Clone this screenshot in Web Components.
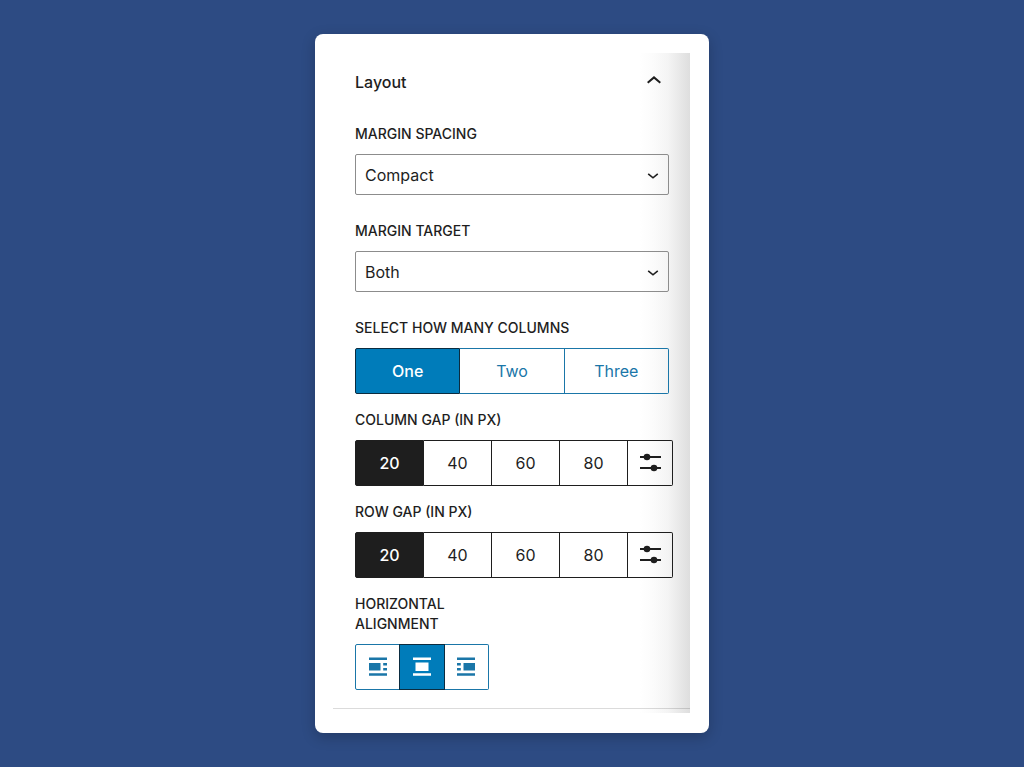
<!DOCTYPE html>
<html lang="en">
<head>
<meta charset="utf-8">
<meta name="viewport" content="width=device-width, initial-scale=1">
<title>Layout settings</title>
<style>
  body {
    margin: 0;
    min-height: 100vh;
    display: grid;
    justify-items: center;
    align-items: center;
    background: #2d4b83;
    color: #1e1e1e;
    font: 16px/20px Inter, "Liberation Sans", sans-serif;
  }
</style>
</head>
<body>
<settings-card>
  <settings-section heading="Layout">
    <select-field label="Margin spacing" options="Compact,Normal,Wide"></select-field>
    <select-field label="Margin target" options="Both,Top,Bottom"></select-field>
    <div>
      <button-group label="Select how many columns" options="One,Two,Three" selected="0"></button-group>
      <button-group label="Column gap (in px)" options="20,40,60,80,icon:sliders" selected="0" tone="dark"></button-group>
      <button-group label="Row gap (in px)" options="20,40,60,80,icon:sliders" selected="0" tone="dark"></button-group>
      <button-group label="Horizontal alignment" options="icon:left,icon:center,icon:right" selected="1" compact></button-group>
    </div>
  </settings-section>
</settings-card>

<script>
const attach = (el, html) => { el.attachShadow({ mode: 'open' }).innerHTML = html; };

class SettingsCard extends HTMLElement {
  constructor() {
    super();
    attach(this, `
      <style>
        :host { display: block; box-sizing: border-box; width: 100%; max-width: 394px; padding: 19px 19px 20px 18px;
          background: #fff; border-radius: 8px; box-shadow: 0 4px 14px rgba(0, 0, 0, .22); }
        main { padding-bottom: 4px;
          background: linear-gradient(to left, #dedede, #e8e8e8 10px, #f4f4f4 22px, #fbfbfb 36px, #fff 50px); }
      </style>
      <main><slot></slot></main>`);
  }
}
customElements.define('settings-card', SettingsCard);

class SettingsSection extends HTMLElement {
  constructor() {
    super();
    attach(this, `
      <style>
        :host { display: block; padding: 19px 21px 18px 22px; border-bottom: 1px solid rgba(0, 0, 0, .14); }
        h2 { margin: 0 0 32px; font: inherit; }
        button { display: flex; align-items: center; justify-content: space-between; width: 100%; height: 20px; padding: 0 6px 0 0;
          border: 0; background: none; color: inherit; font: 500 16px/20px Inter, sans-serif; cursor: pointer; }
        svg { width: 18px; height: 20px; fill: none; stroke: currentColor; stroke-width: 2; }
        .fields { display: grid; gap: 26px; }
        .fields[hidden] { display: none; }
      </style>
      <h2><button type="button" aria-expanded="true"><span></span>
        <svg viewBox="0 0 18 20" aria-hidden="true"><path d="M2.700 10.800 9 5.400l6.300 5.400"/></svg></button></h2>
      <div class="fields"><slot></slot></div>`);
  }
  connectedCallback() {
    const root = this.shadowRoot, button = root.querySelector('button');
    root.querySelector('span').textContent = this.getAttribute('heading');
    button.onclick = () => {
      const open = button.getAttribute('aria-expanded') === 'true';
      button.setAttribute('aria-expanded', String(!open));
      root.querySelector('.fields').hidden = open;
    };
  }
}
customElements.define('settings-section', SettingsSection);

class SelectField extends HTMLElement {
  connectedCallback() {
    const options = this.getAttribute('options').split(',').map(o => `<option>${o}</option>`).join('');
    attach(this, `
      <style>
        :host { display: grid; gap: 10px; }
        label { font: 500 14px/20px Inter, sans-serif; text-transform: uppercase; }
        .box { display: grid; align-items: center; }
        .box > * { grid-area: 1 / 1; }
        select { appearance: none; width: 100%; height: 41px; margin: 0; padding: 0 36px 0 9px; border: 1px solid #8c8c8c;
          border-radius: 2px; background: none; color: inherit; font: 16px/20px Inter, sans-serif; }
        svg { justify-self: end; width: 12px; height: 12px; margin-right: 10px; pointer-events: none;
          fill: none; stroke: currentColor; stroke-width: 1.600; }
      </style>
      <label for="control">${this.getAttribute('label')}</label>
      <div class="box"><select id="control">${options}</select>
        <svg viewBox="0 0 12 12" aria-hidden="true"><path d="M1.200 4.800 6 8.800l4.800-4"/></svg></div>`);
  }
}
customElements.define('select-field', SelectField);

const ICONS = {
  sliders: '<path d="M2 6h21M2 17h21" fill="none" stroke="currentColor" stroke-width="2"/><circle cx="9" cy="6" r="3.300"/><circle cx="16" cy="17" r="3.300"/>',
  left: '<path d="M3 2.500h18v2.600H3zM3 8h11.500v7.600H3zM17.200 8H21v2.500h-3.800zM17.200 13.100H21v2.500h-3.800zM3 18.200h18v2.600H3z"/>',
  center: '<path d="M3 2.500h18v2.600H3zM5.500 7.600h13v8.400h-13zM3 18.200h18v2.600H3z"/>',
  right: '<path d="M3 2.500h18v2.600H3zM9.500 8H21v7.600H9.500zM3 8h3.800v2.500H3zM3 13.100h3.800v2.500H3zM3 18.200h18v2.600H3z"/>'
};
const ICON_NAMES = { sliders: 'Custom value', left: 'Align left', center: 'Align center', right: 'Align right' };

class ButtonGroup extends HTMLElement {
  connectedCallback() {
    const selected = Number(this.getAttribute('selected'));
    const buttons = this.getAttribute('options').split(',').map((option, i) => {
      const name = option.startsWith('icon:') ? option.slice(5) : '';
      const content = name ? `<svg viewBox="0 0 24 24" aria-hidden="true">${ICONS[name]}</svg>` : option;
      return `<button type="button" aria-pressed="${i === selected}" ${name ? `class="icon" aria-label="${ICON_NAMES[name]}"` : ''}>${content}</button>`;
    }).join('');
    attach(this, `
      <style>
        :host { display: grid; gap: 10px; --line: #1a76a8; --text: #1a76a8; --fill: #007cba; --edge: #0b2c40; }
        :host(:not(:last-child)) { margin-bottom: 16px; }
        :host([tone="dark"]) { --line: #1e1e1e; --text: #1e1e1e; --fill: #1e1e1e; --edge: #1e1e1e; margin-right: -4px; }
        :host([compact]) { width: 134px; }
        .label { font: 500 14px/20px Inter, sans-serif; text-transform: uppercase; }
        .group { display: flex; }
        button { box-sizing: border-box; flex: 1 1 0; height: 46px; padding: 0; border: 1px solid var(--line); border-left-width: 0;
          background: none; color: var(--text); font: 16px/20px Inter, sans-serif; cursor: pointer; }
        .icon { display: grid; place-items: center; }
        :host([tone="dark"]) .icon { flex: 0 0 45px; }
        button:first-child { border-left-width: 1px; border-radius: 2px 0 0 2px; }
        button:last-child { border-radius: 0 2px 2px 0; }
        button[aria-pressed="true"] { background: var(--fill); border-color: var(--edge); color: #fff; font-weight: 500; }
        button[aria-pressed="true"]:not(:first-child) { box-shadow: -1px 0 var(--edge); }
        svg { width: 24px; height: 24px; fill: currentColor; }
      </style>
      <div class="label" id="label">${this.getAttribute('label')}</div>
      <div class="group" role="group" aria-labelledby="label">${buttons}</div>`);
    const all = [...this.shadowRoot.querySelectorAll('button')];
    all.forEach(button => button.onclick = () =>
      all.forEach(b => b.setAttribute('aria-pressed', String(b === button))));
  }
}
customElements.define('button-group', ButtonGroup);
</script>
</body>
</html>
